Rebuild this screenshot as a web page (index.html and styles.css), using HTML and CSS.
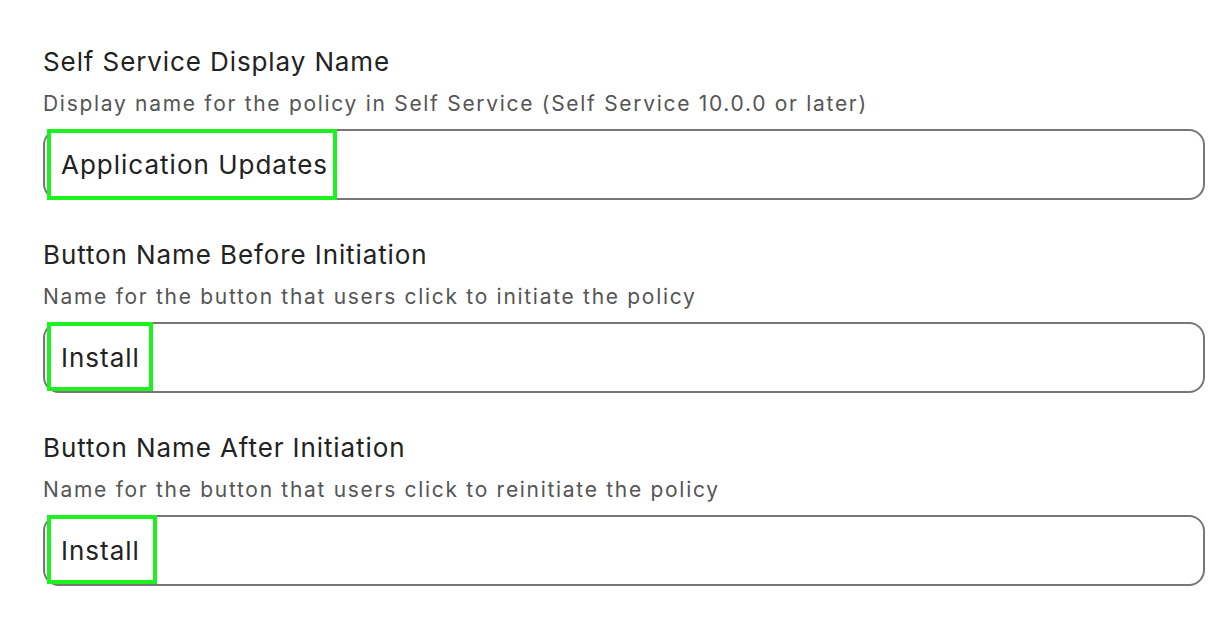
FILE: index.html
```html
<!DOCTYPE html>
<html>
<head>
<meta charset="utf-8">
<link rel="stylesheet" href="styles.css">
</head>
<body>
<div class="form">
  <div class="field">
    <div class="label">Self Service Display Name</div>
    <div class="hint">Display name for the policy in Self Service (Self Service 10.0.0 or later)</div>
    <div class="input">
      <span class="value">Application Updates</span>
      <span class="mark mark-app"></span>
    </div>
  </div>
  <div class="field">
    <div class="label">Button Name Before Initiation</div>
    <div class="hint">Name for the button that users click to initiate the policy</div>
    <div class="input">
      <span class="value">Install</span>
      <span class="mark mark-install1"></span>
    </div>
  </div>
  <div class="field">
    <div class="label">Button Name After Initiation</div>
    <div class="hint">Name for the button that users click to reinitiate the policy</div>
    <div class="input">
      <span class="value">Install</span>
      <span class="mark mark-install2"></span>
    </div>
  </div>
</div>
</body>
</html>
```

FILE: styles.css
```css
html, body {
  margin: 0;
  padding: 0;
  background: #ffffff;
}
body {
  font-family: Inter, "Noto Sans", sans-serif;
  color: #222222;
}
.form {
  width: 1162px;
  padding: 46px 0 0 43px;
  display: flex;
  flex-direction: column;
  gap: 39px;
}
.field {
  display: flex;
  flex-direction: column;
}
.label {
  font-size: 26px;
  line-height: 32px;
  letter-spacing: 0.9px;
  color: #222222;
}
.hint {
  margin-top: 14px;
  font-size: 21px;
  line-height: 24px;
  color: #555555;
  letter-spacing: 1.7px;
}
.input {
  position: relative;
  margin-top: 13px;
  height: 67px;
  border: 2px solid #777777;
  border-radius: 16px;
  display: flex;
  align-items: center;
  padding-left: 16px;
}
.value {
  font-size: 26px;
  letter-spacing: 1px;
  color: #222222;
}
.mark {
  position: absolute;
  top: -2px;
  left: 2px;
  height: 71px;
  box-sizing: border-box;
  border: 4px solid #1ef21e;
}
.mark-app { width: 290px; }
.mark-install1 { width: 106px; height: 69px; }
.mark-install2 { width: 110px; height: 69px; }
```
